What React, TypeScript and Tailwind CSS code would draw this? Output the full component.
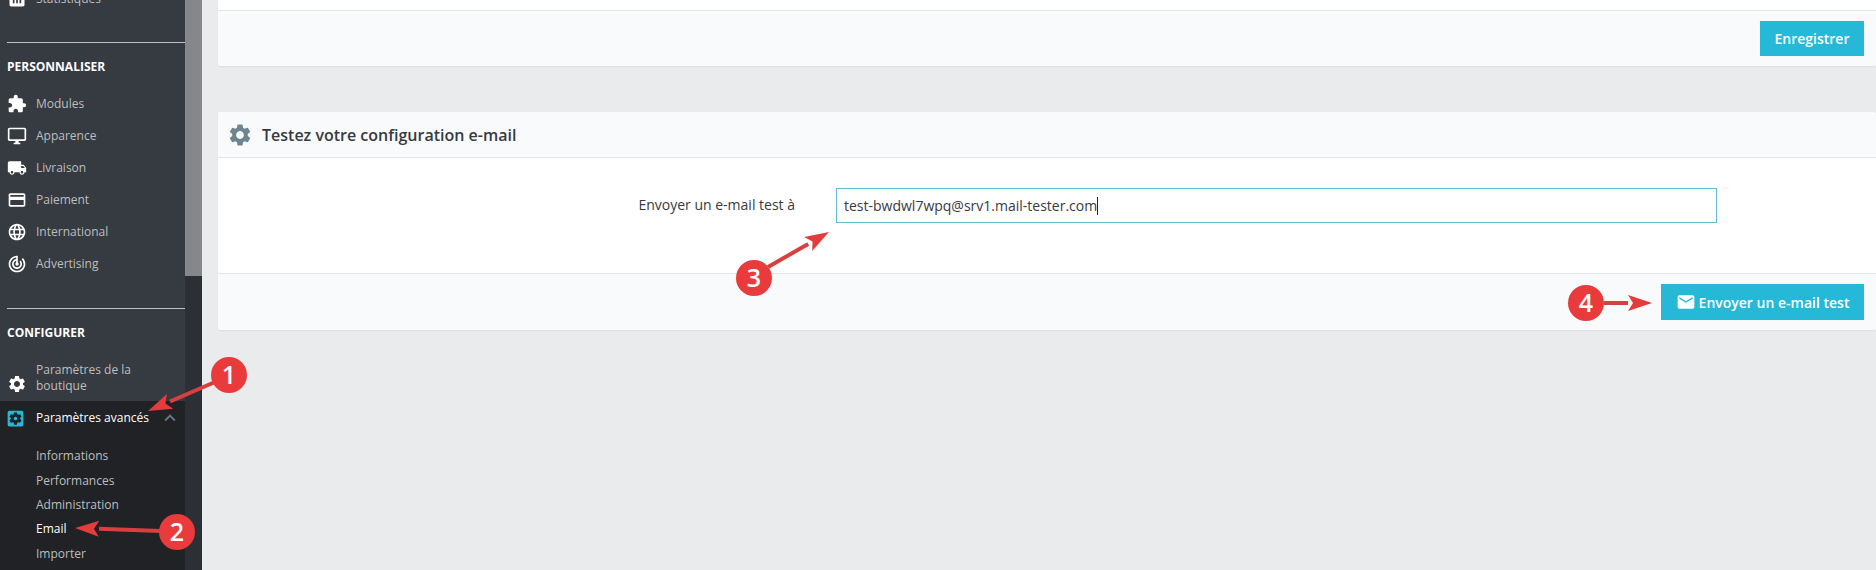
import { MdAssessment, MdCreditCard, MdExpandLess, MdExtension, MdLanguage, MdLocalShipping, MdMail, MdOutlineDesktopWindows, MdSettings, MdSettingsApplications, MdTrackChanges } from "react-icons/md"

const customize = [
    { label: "Modules", icon: MdExtension },
    { label: "Apparence", icon: MdOutlineDesktopWindows },
    { label: "Livraison", icon: MdLocalShipping },
    { label: "Paiement", icon: MdCreditCard },
    { label: "International", icon: MdLanguage },
    { label: "Advertising", icon: MdTrackChanges },
]

const subItems = ["Informations", "Performances", "Administration", "Email", "Importer"]

// red numbered markers drawn over the screenshot
const markers = [
    { n: "1", cx: 229, cy: 375, x1: 215, y1: 382, x2: 148, y2: 411 },
    { n: "2", cx: 177, cy: 532, x1: 160, y1: 531, x2: 75, y2: 528 },
    { n: "3", cx: 754, cy: 278, x1: 768, y1: 267, x2: 829, y2: 232 },
    { n: "4", cx: 1586, cy: 303, x1: 1604, y1: 303, x2: 1652, y2: 303 },
]

const Arrow = ({ m }: { m: (typeof markers)[number] }) => {
    const angle = Math.atan2(m.y2 - m.y1, m.x2 - m.x1)
    const head = 24
    const bx = m.x2 - Math.cos(angle) * head
    const by = m.y2 - Math.sin(angle) * head
    const nx = -Math.sin(angle)
    const ny = Math.cos(angle)
    const pts = `${m.x2},${m.y2} ${bx + nx * 8},${by + ny * 8} ${bx + Math.cos(angle) * 5},${by + Math.sin(angle) * 5} ${bx - nx * 8},${by - ny * 8}`
    return (
        <g>
            <line x1={m.x1} y1={m.y1} x2={bx} y2={by} stroke="#d84040" strokeWidth="4" />
            <polygon points={pts} fill="#e53b3b" />
            <circle cx={m.cx} cy={m.cy} r="18" fill="#e93a3c" />
            <text x={m.cx} y={m.cy + 9} textAnchor="middle" fontSize="25" fontWeight="600" fill="#fff" fontFamily="'Open Sans', sans-serif">{m.n}</text>
        </g>
    )
}

const App = () => {
    return (
        <div className="relative flex h-[570px] w-[1876px] overflow-hidden bg-[#eaebec] font-['Open_Sans',sans-serif]">
            <aside className="flex w-[202px] shrink-0">
                <nav className="flex w-[185px] flex-col bg-[#363a41] text-[12px] text-[#bebebe]">
                    <div className="mt-[-9px] flex h-[16px] items-center">
                        <MdAssessment className="ml-[7px] text-[20px] text-white" />
                        <span className="ml-[9px]">Statistiques</span>
                    </div>
                    <div className="ml-[7px] mt-[35px] border-t border-[#bfc1c4]" />
                    <h3 className="ml-[7px] mt-[15px] text-[12px] leading-[17px] font-bold text-white">PERSONNALISER</h3>
                    <ul className="mt-[13px] flex flex-col">
                        {customize.map((item) => (
                            <li key={item.label} className="flex h-[32px] items-center">
                                <item.icon className="ml-[7px] text-[20px] text-white" />
                                <span className="ml-[9px]">{item.label}</span>
                            </li>
                        ))}
                    </ul>
                    <div className="ml-[7px] mt-[28px] border-t border-[#bfc1c4]" />
                    <h3 className="ml-[7px] mt-[15px] text-[12px] leading-[17px] font-bold text-white">CONFIGURER</h3>
                    <div className="mt-[20px] flex h-[40px] items-end pb-[7px]">
                        <MdSettings className="ml-[7px] text-[20px] text-white" />
                        <span className="ml-[9px] w-[110px] leading-[16px]">Paramètres de la boutique</span>
                    </div>
                    <div className="flex flex-1 flex-col bg-[#202226]">
                        <div className="flex h-[32px] items-center pt-[2px] text-white">
                            <MdSettingsApplications className="ml-[5px] text-[21px] text-[#25b9d7]" />
                            <span className="ml-[10px]">Paramètres avancés</span>
                            <MdExpandLess className="ml-[10px] text-[22px] text-[#6c7480]" />
                        </div>
                        <ul className="mt-[11px] flex flex-col pl-[36px]">
                            {subItems.map((label) => (
                                <li key={label} className={`flex h-[24.4px] items-center ${label === "Email" ? "text-white" : ""}`}>{label}</li>
                            ))}
                        </ul>
                    </div>
                </nav>
                <div className="flex w-[17px] flex-col bg-[#2c2f35]">
                    <div className="h-[276px] bg-[#85878a]" />
                </div>
            </aside>

            <main className="ml-[16px] flex min-w-0 flex-1 flex-col text-[#363a41]">
                <section className="mt-[-10px] h-[76px] rounded-[3px] bg-white shadow-[0_1px_2px_rgba(0,0,0,0.06)]">
                    <div className="mt-[20px] flex h-[56px] items-center justify-end rounded-b-[3px] border-t border-[#e1e6ea] bg-[#f9fafb] pr-[12px]">
                        <button className="h-[35px] w-[104px] bg-[#25b9d7] text-[14px] font-semibold text-white">Enregistrer</button>
                    </div>
                </section>

                <section className="mt-[46px] flex h-[218px] flex-col rounded-[3px] bg-white shadow-[0_1px_2px_rgba(0,0,0,0.06)]">
                    <header className="flex h-[46px] items-center rounded-t-[3px] border-b border-[#e1e6ea] bg-[#f9fafb] pl-[9px]">
                        <MdSettings className="text-[26px] text-[#6c868e]" />
                        <h2 className="ml-[9px] text-[16px] font-semibold text-[#363a41]">Testez votre configuration e-mail</h2>
                    </header>
                    <div className="flex flex-1 items-start pt-[30px]">
                        <label className="ml-[421px] flex h-[35px] w-[156px] items-center justify-end pb-[3px] text-[14px] whitespace-nowrap">Envoyer un e-mail test à</label>
                        <div className="ml-[41px] flex h-[35px] w-[881px] items-center border border-[#61bcce] px-[7px] text-[14px]">
                            <span>test-bwdwl7wpq@srv1.mail-tester.com</span>
                            <span className="h-[18px] w-px bg-[#222]" />
                        </div>
                    </div>
                    <footer className="flex h-[57px] items-center justify-end rounded-b-[3px] border-t border-[#e1e6ea] bg-[#f9fafb] pr-[12px]">
                        <button className="flex h-[36px] w-[203px] items-center justify-center gap-[3px] bg-[#25b9d7] text-[14px] font-semibold text-white">
                            <MdMail className="text-[20px]" />
                            Envoyer un e-mail test
                        </button>
                    </footer>
                </section>
            </main>

            <svg className="absolute left-0 top-0" width="1876" height="570">
                {markers.map((m) => <Arrow key={m.n} m={m} />)}
            </svg>
        </div>
    )
}

export default App
